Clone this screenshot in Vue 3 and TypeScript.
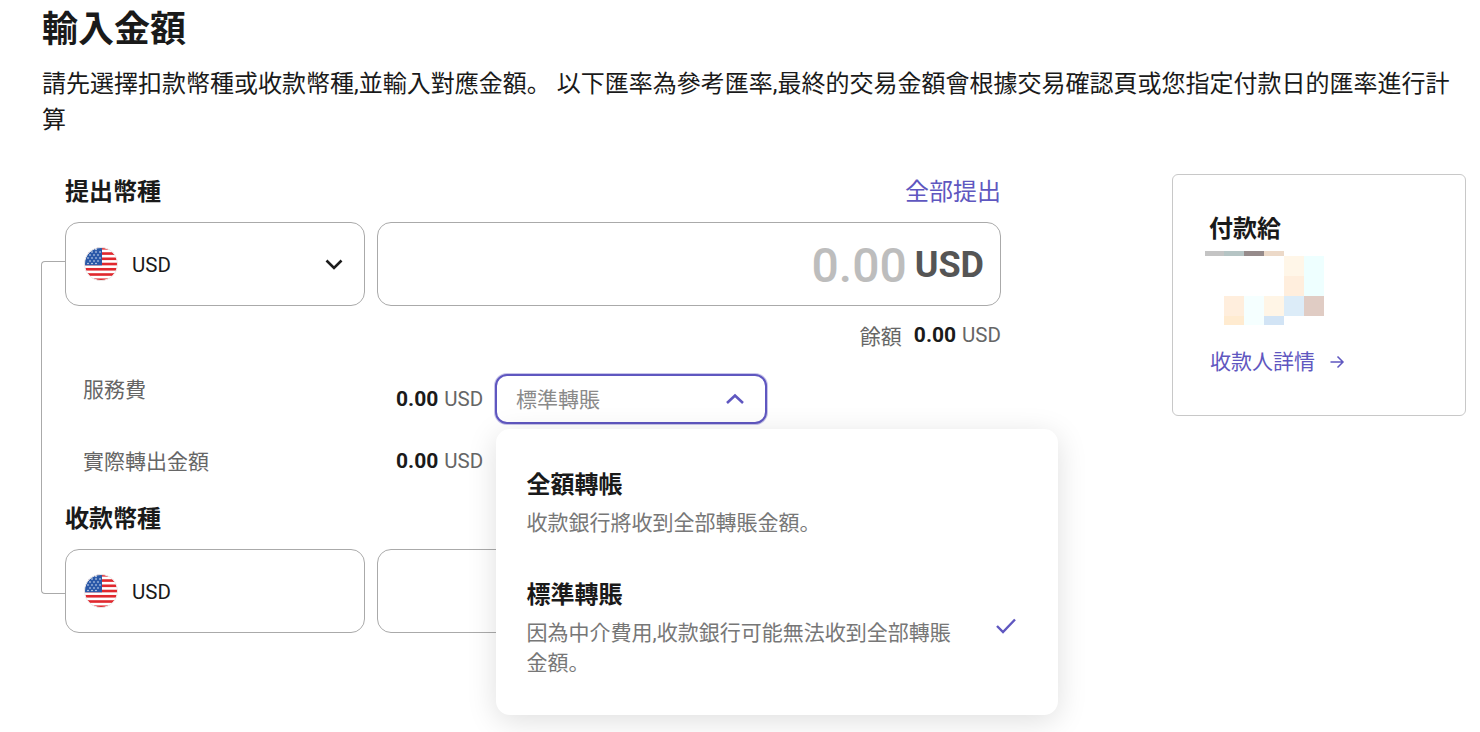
<script setup lang="ts">
const tiles: [number, number, number, number, string][] = [
  [0, 0, 19, 5, '#c4c4c4'], [19, 0, 20, 5, '#b5c4c4'], [39, 0, 20, 5, '#968b8b'], [59, 0, 20, 5, '#ecd9c8'],
  [79, 5, 20, 20, '#fff6e8'], [99, 5, 20, 20, '#eeffff'],
  [79, 25, 20, 20, '#ffeedd'], [99, 25, 20, 20, '#eeffff'],
  [19, 45, 20, 20, '#ffeedd'], [39, 45, 20, 20, '#f5ffff'], [59, 45, 20, 20, '#fff5e6'], [79, 45, 20, 20, '#dcecf8'], [99, 45, 20, 20, '#e0ccc4'],
  [19, 65, 20, 9, '#ffebd0'], [39, 65, 20, 9, '#f5ffff'], [59, 65, 20, 9, '#d2e4f5'],
]
const stripes = [0, 2, 4, 6, 8, 10, 12].map((n) => n * 2.62)
const stars = [[4,5],[8,5],[12,5],[16,5],[6,8],[10,8],[14,8],[4,11],[8,11],[12,11],[16,11],[6,14],[10,14],[14,14],[8,2.5],[12,2.5],[4,16.5],[8,16.5],[12,16.5]]
</script>

<template>
  <div class="page">
    <h1 class="title">輸入金額</h1>
    <p class="intro">請先選擇扣款幣種或收款幣種,並輸入對應金額。 以下匯率為參考匯率,最終的交易金額會根據交易確認頁或您指定付款日的匯率進行計算</p>

    <div class="main">
      <section class="form">
        <div class="connector"></div>

        <div class="head">
          <h2 class="label">提出幣種</h2>
          <a class="link">全部提出</a>
        </div>
        <div class="row">
          <div class="box currency">
            <svg class="flag" viewBox="0 0 34 34">
              <defs><clipPath id="flag-a"><circle cx="17" cy="17" r="16.5" /></clipPath></defs>
              <g clip-path="url(#flag-a)">
                <rect width="34" height="34" fill="#fff" />
                <rect v-for="y in stripes" :key="y" x="0" :y="y" width="34" height="2.62" fill="#e0282e" />
                <rect width="18" height="18.3" fill="#2a58a8" />
                <g fill="#dfe8f6">
                  <circle v-for="p in stars" :key="p.join()" :cx="p[0]" :cy="p[1]" r="0.8" />
                </g>
              </g>
              <circle cx="17" cy="17" r="16.5" fill="none" stroke="#ececec" />
            </svg>
            <span class="code">USD</span>
            <svg class="chev" viewBox="0 0 18 12"><path d="M1.5 2.5 9 10 16.5 2.5" fill="none" stroke="#1c1c1c" stroke-width="2.6" /></svg>
          </div>
          <div class="box amount">
            <span class="zero">0.00</span>
            <span class="unit">USD</span>
          </div>
        </div>
        <div class="balance">
          <span>餘額</span><b>0.00</b><span class="usd">USD</span>
        </div>

        <div class="fee fee-first">
          <span class="fee-label fee-label-up">服務費</span>
          <span class="fee-val"><b>0.00</b> <span>USD</span></span>
          <div class="select-wrap">
            <div class="select">
              <span class="select-text">標準轉賬</span>
              <svg class="chev-up" viewBox="0 0 20 12"><path d="M2 10 10 2.5 18 10" fill="none" stroke="#5f57c0" stroke-width="2.6" /></svg>
            </div>
            <div class="menu">
              <div class="opt">
                <div class="opt-text">
                  <div class="opt-title">全額轉帳</div>
                  <div class="opt-desc">收款銀行將收到全部轉賬金額。</div>
                </div>
              </div>
              <div class="opt opt-second">
                <div class="opt-text">
                  <div class="opt-title">標準轉賬</div>
                  <div class="opt-desc">因為中介費用,收款銀行可能無法收到全部轉賬金額。</div>
                </div>
                <svg class="check" viewBox="0 0 20 16"><path d="M1 8 7 14 19 1.500" fill="none" stroke="#5f57c0" stroke-width="2.4" /></svg>
              </div>
            </div>
          </div>
        </div>
        <div class="fee fee-second">
          <span class="fee-label">實際轉出金額</span>
          <span class="fee-val"><b>0.00</b> <span>USD</span></span>
        </div>

        <h2 class="label label-second">收款幣種</h2>
        <div class="row">
          <div class="box currency">
            <svg class="flag" viewBox="0 0 34 34">
              <defs><clipPath id="flag-b"><circle cx="17" cy="17" r="16.5" /></clipPath></defs>
              <g clip-path="url(#flag-b)">
                <rect width="34" height="34" fill="#fff" />
                <rect v-for="y in stripes" :key="y" x="0" :y="y" width="34" height="2.62" fill="#e0282e" />
                <rect width="18" height="18.3" fill="#2a58a8" />
                <g fill="#dfe8f6">
                  <circle v-for="p in stars" :key="p.join()" :cx="p[0]" :cy="p[1]" r="0.8" />
                </g>
              </g>
              <circle cx="17" cy="17" r="16.5" fill="none" stroke="#ececec" />
            </svg>
            <span class="code">USD</span>
          </div>
          <div class="box amount"></div>
        </div>
      </section>

      <aside class="card">
        <h3 class="card-title">付款給</h3>
        <svg class="blur" width="119" height="74" viewBox="0 0 119 74">
          <rect v-for="t in tiles" :key="t.join()" :x="t[0]" :y="t[1]" :width="t[2]" :height="t[3]" :fill="t[4]" />
        </svg>
        <a class="detail">收款人詳情
          <svg class="arrow" viewBox="0 0 16 16"><path d="M1.500 8H14M8.500 2.500 14 8l-5.500 5.500" fill="none" stroke="#5f57c0" stroke-width="1.500" /></svg>
        </a>
      </aside>
    </div>
  </div>
</template>

<style>
html, body { margin: 0; background: #fff; overflow: hidden; }
</style>

<style scoped>
.page {
  box-sizing: border-box;
  width: 1480px;
  height: 732px;
  padding: 8px 14px 0 41px;
  overflow: hidden;
  font-family: Roboto, "Noto Sans CJK JP", sans-serif;
  color: #1a1a1a;
}
.title { margin: 0 0 0 1px; font-size: 36px; line-height: 44px; font-weight: 700; }
.intro { margin: 14px 0 0 1px; font-size: 24px; line-height: 36px; }
.main { display: flex; margin-top: 36px; }
.form { position: relative; width: 936px; margin-left: 24px; flex: none; }
.connector {
  position: absolute;
  left: -24px; top: 87px;
  width: 24px; height: 333px;
  border: 1px solid #aaa;
  border-right: 0;
  border-radius: 4px 0 0 4px;
  box-sizing: border-box;
}
.head { display: flex; justify-content: space-between; align-items: center; height: 36px; }
.label { margin: 0; font-size: 24px; line-height: 36px; font-weight: 700; }
.label-second { margin-top: 23px; }
.link { color: #5f57c0; font-size: 24px; line-height: 36px; }
.row { display: flex; gap: 12px; margin-top: 12px; }
.box {
  box-sizing: border-box;
  height: 84px;
  border: 1px solid #aaa;
  border-radius: 14px;
  background: #fff;
  display: flex;
  align-items: center;
}
.currency { position: relative; width: 300px; flex: none; padding: 0 18px; }
.flag { width: 34px; height: 34px; flex: none; }
.code { margin: 2px 0 0 14px; font-size: 20.5px; }
.chev { width: 18px; height: 12px; margin-left: auto; margin-right: 3px; }
.amount { flex: 1; justify-content: flex-end; padding: 2px 16px 0 0; }
.zero { font-size: 48px; font-weight: 500; color: #bdbdbd; }
.unit { font-size: 36px; font-weight: 700; color: #555; margin-left: 8px; }
.balance {
  display: flex;
  justify-content: flex-end;
  align-items: center;
  height: 28px;
  margin-top: 15px;
  font-size: 20.5px;
  color: #666;
}
.balance span:first-child { font-size: 21px; }
.balance b { margin: 0 6px 0 12px; font-size: 21px; color: #1a1a1a; }
.fee { display: flex; }
.fee-first { margin-top: 25px; height: 50px; }
.fee-second { margin-top: 20px; height: 34px; align-items: center; }
.fee-label { width: 313px; padding-left: 18px; font-size: 21px; color: #666; flex: none; }
.fee-second .fee-label { margin-top: -2px; }
.fee-label-up { line-height: 32px; }
.fee-val { display: flex; gap: 6px; align-items: center; font-size: 20.5px; color: #666; width: 99px; flex: none; height: 50px; }
.fee-val b { font-size: 21px; color: #1a1a1a; }
.select-wrap { position: relative; width: 272px; flex: none; }
.select {
  box-sizing: border-box;
  height: 50px;
  border: 2px solid #5f57c0;
  border-radius: 12px;
  box-shadow: 0 0 0 1px rgba(95, 87, 192, 0.35);
  padding: 0 20px 0 19px;
  display: flex;
  align-items: center;
  justify-content: space-between;
  font-size: 21px;
  color: #8a8a8a;
  background: #fff;
}
.select-text { margin-top: -2px; }
.chev-up { width: 20px; height: 12px; }
.menu {
  position: absolute;
  z-index: 2;
  left: 1px; top: 55px;
  box-sizing: border-box;
  width: 562px;
  height: 286px;
  padding: 37px 30.5px 0;
  background: #fff;
  border-radius: 14px;
  box-shadow: 0 6px 30px rgba(0, 0, 0, 0.13);
}
.opt { display: flex; justify-content: space-between; align-items: center; }
.opt-second { margin-top: 38px; }
.opt-text { width: 430px; }
.opt-title { font-size: 24px; line-height: 38px; font-weight: 700; }
.opt-desc { font-size: 21px; line-height: 30px; color: #777; margin-top: 4px; }
.check { width: 20px; height: 16px; margin-right: 12px; margin-top: -3px; }
.card {
  box-sizing: border-box;
  width: 294px;
  height: 242px;
  margin-left: 171px;
  margin-top: 0;
  border: 1px solid #c8c8c8;
  border-radius: 6px;
  padding: 36px 0 0 32px;
  flex: none;
}
.card-title { margin: 0; padding-left: 4px; font-size: 24px; line-height: 36px; font-weight: 700; }
.blur { display: block; margin-top: 4px; }
.detail { display: flex; align-items: center; gap: 14px; margin-top: 22px; padding-left: 5px; font-size: 21px; line-height: 30px; color: #5f57c0; }
.arrow { width: 16px; height: 16px; }
</style>
